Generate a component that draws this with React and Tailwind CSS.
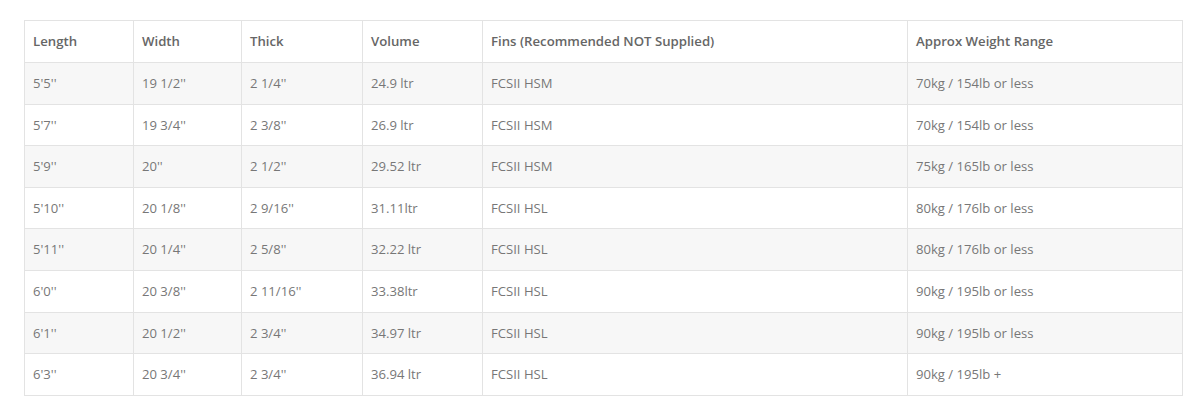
export default function App() {
  const head = ["Length", "Width", "Thick", "Volume", "Fins (Recommended NOT Supplied)", "Approx Weight Range"];
  const rows = [
    ["5'5''", "19 1/2''", "2 1/4''", "24.9 ltr", "FCSII HSM", "70kg / 154lb or less"],
    ["5'7''", "19 3/4''", "2 3/8''", "26.9 ltr", "FCSII HSM", "70kg / 154lb or less"],
    ["5'9''", "20''", "2 1/2''", "29.52 ltr", "FCSII HSM", "75kg / 165lb or less"],
    ["5'10''", "20 1/8''", "2 9/16''", "31.11ltr", "FCSII HSL", "80kg / 176lb or less"],
    ["5'11''", "20 1/4''", "2 5/8''", "32.22 ltr", "FCSII HSL", "80kg / 176lb or less"],
    ["6'0''", "20 3/8''", "2 11/16''", "33.38ltr", "FCSII HSL", "90kg / 195lb or less"],
    ["6'1''", "20 1/2''", "2 3/4''", "34.97 ltr", "FCSII HSL", "90kg / 195lb or less"],
    ["6'3''", "20 3/4''", "2 3/4''", "36.94 ltr", "FCSII HSL", "90kg / 195lb +"],
  ];
  const widths = ["w-[109px]", "w-[108px]", "w-[121px]", "w-[120px]", "w-[425px]", "w-[275px]"];
  return (
    <div className="bg-white w-[1199px] h-[408px] pt-[20px] pl-[24px]" style={{ fontFamily: '"Open Sans", sans-serif' }}>
      <table className="border-collapse w-[1158px] table-fixed text-[13px]">
        <colgroup>
          {widths.map((w, i) => (
            <col key={i} className={w} />
          ))}
        </colgroup>
        <thead>
          <tr className="bg-white">
            {head.map((h, i) => (
              <th key={i} className="border border-[#e3e3e3] text-left font-semibold text-[#666666] pl-[8px] py-[10px] leading-[21px] h-[42px] text-[13.2px]">
                {h}
              </th>
            ))}
          </tr>
        </thead>
        <tbody>
          {rows.map((r, ri) => (
            <tr key={ri} className={ri % 2 === 0 ? "bg-[#f7f7f7]" : "bg-white"}>
              {r.map((c, ci) => (
                <td key={ci} className="border border-[#e3e3e3] text-left text-[#777777] pl-[8px] py-[10px] leading-[20.6px] h-[41.6px] text-[13.1px]">
                  {c}
                </td>
              ))}
            </tr>
          ))}
        </tbody>
      </table>
    </div>
  );
}
